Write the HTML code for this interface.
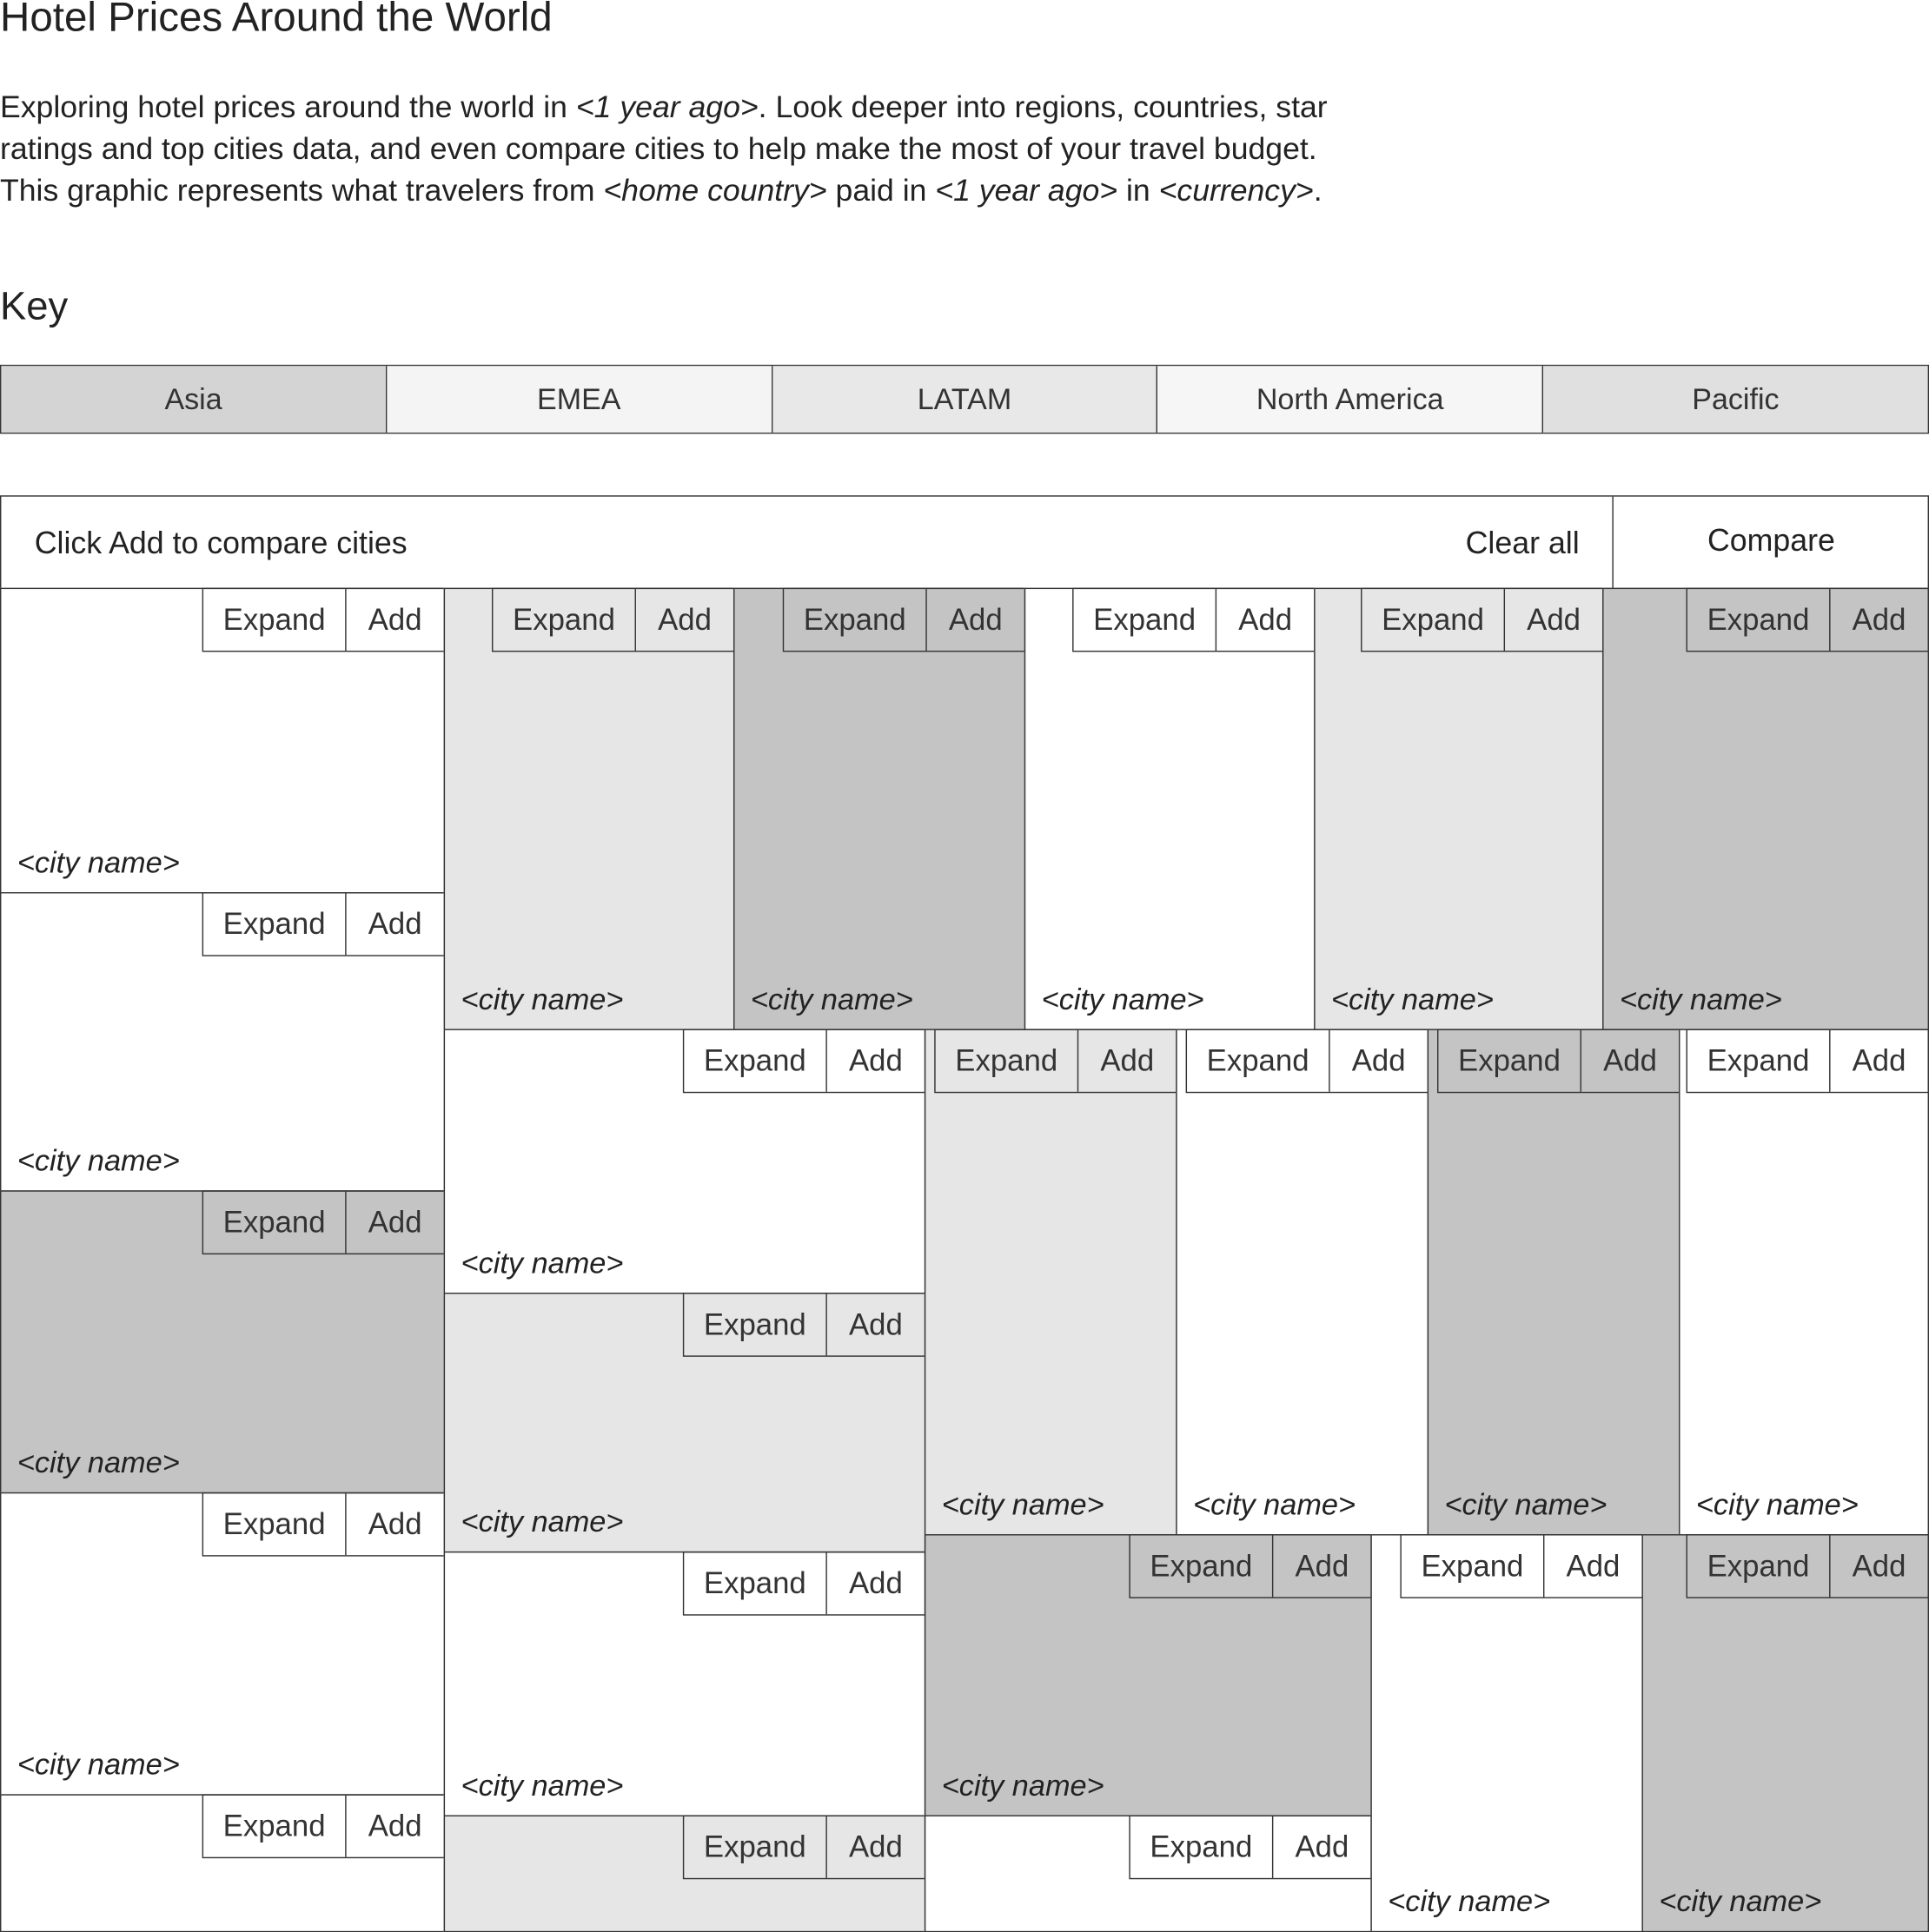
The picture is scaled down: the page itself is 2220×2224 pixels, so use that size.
<!DOCTYPE html>
<html><head><meta charset="utf-8">
<style>
html,body{margin:0;padding:0;background:#fff;overflow:hidden}
body{width:2220px;height:2224px;position:relative}
#w{position:absolute;left:0;top:0;width:1565px;height:1568px;transform:scale(1.41853);transform-origin:0 0;font-family:"Liberation Sans",sans-serif;color:#222}
.a{position:absolute;white-space:nowrap}
h1{position:absolute;left:0;top:-4px;margin:0;font-weight:normal;font-size:33.5px;color:#222;white-space:nowrap}
.p{position:absolute;left:0;top:70px;font-size:25.1px;line-height:34px;color:#222;white-space:nowrap}
.key{position:absolute;left:0;top:230px;font-size:32px}
.bar{position:absolute;left:0;top:296px;width:1565px;height:56px;border:1.3px solid #333;box-sizing:border-box;display:flex}
.bar div{flex:1;text-align:center;line-height:56px;font-size:24px;border-right:1.3px solid #333;color:#333}
.bar div:last-child{border-right:none}
.box{position:absolute;left:0;top:402px;width:1565px;height:1166px;border:1.3px solid #333;box-sizing:border-box}
.t{position:absolute;border:1.3px solid #333;box-sizing:border-box}
.b{position:absolute;right:-1px;top:-1px;height:52px;display:flex;border:1.3px solid #333;box-sizing:border-box;font-size:24.5px;color:#333}
.b span{display:block;text-align:center;line-height:52px}
.b span.e{width:115px;border-right:1.3px solid #333}
.b span.d{width:79px}
.c{position:absolute;left:13px;bottom:9px;font-style:italic;font-size:24.2px;color:#222;white-space:nowrap}
.w{background:#fff}.l{background:#e6e6e6}.k{background:#c4c4c4}
</style></head><body><div id="w">
<h1>Hotel Prices Around the World</h1>
<div class="p">Exploring hotel prices around the world in <i>&lt;1 year ago&gt;</i>. Look deeper into regions, countries, star<br>ratings and top cities data, and even compare cities to help make the most of your travel budget.<br>This graphic represents what travelers from <i>&lt;home country&gt;</i> paid in <i>&lt;1 year ago&gt;</i> in <i>&lt;currency&gt;</i>.</div>
<div class="key">Key</div>
<div class="bar"><div style="background:#d4d4d4">Asia</div><div style="background:#f4f4f4">EMEA</div><div style="background:#e8e8e8">LATAM</div><div style="background:#f6f6f6">North America</div><div style="background:#e0e0e0">Pacific</div></div>
<div class="box">
<div class="a" style="left:27px;top:24px;font-size:25.2px">Click Add to compare cities</div>
<div class="a" style="left:1188px;top:24px;font-size:25.2px">Clear all</div>
<div class="a" style="left:1307px;top:0;width:1.3px;height:75px;background:#333"></div>
<div class="a" style="left:1308px;top:22px;width:256px;text-align:center;font-size:25.2px">Compare</div>
</div>
<div class="t w" style="left:0;top:477px;width:361px;height:248px"><div class="b"><span class="e">Expand</span><span class="d">Add</span></div><div class="c">&lt;city name&gt;</div></div>
<div class="t w" style="left:0;top:724px;width:361px;height:243px"><div class="b"><span class="e">Expand</span><span class="d">Add</span></div><div class="c">&lt;city name&gt;</div></div>
<div class="t k" style="left:0;top:966px;width:361px;height:246px"><div class="b"><span class="e">Expand</span><span class="d">Add</span></div><div class="c">&lt;city name&gt;</div></div>
<div class="t w" style="left:0;top:1211px;width:361px;height:246px"><div class="b"><span class="e">Expand</span><span class="d">Add</span></div><div class="c">&lt;city name&gt;</div></div>
<div class="t w" style="left:0;top:1456px;width:361px;height:112px"><div class="b"><span class="e">Expand</span><span class="d">Add</span></div></div>
<div class="t l" style="left:360px;top:477px;width:236px;height:359px"><div class="b"><span class="e">Expand</span><span class="d">Add</span></div><div class="c">&lt;city name&gt;</div></div>
<div class="t k" style="left:595px;top:477px;width:237px;height:359px"><div class="b"><span class="e">Expand</span><span class="d">Add</span></div><div class="c">&lt;city name&gt;</div></div>
<div class="t w" style="left:831px;top:477px;width:236px;height:359px"><div class="b"><span class="e">Expand</span><span class="d">Add</span></div><div class="c">&lt;city name&gt;</div></div>
<div class="t l" style="left:1066px;top:477px;width:235px;height:359px"><div class="b"><span class="e">Expand</span><span class="d">Add</span></div><div class="c">&lt;city name&gt;</div></div>
<div class="t k" style="left:1300px;top:477px;width:265px;height:359px"><div class="b"><span class="e">Expand</span><span class="d">Add</span></div><div class="c">&lt;city name&gt;</div></div>
<div class="t w" style="left:360px;top:835px;width:391px;height:215px"><div class="b"><span class="e">Expand</span><span class="d">Add</span></div><div class="c">&lt;city name&gt;</div></div>
<div class="t l" style="left:360px;top:1049px;width:391px;height:211px"><div class="b"><span class="e">Expand</span><span class="d">Add</span></div><div class="c">&lt;city name&gt;</div></div>
<div class="t w" style="left:360px;top:1259px;width:391px;height:215px"><div class="b"><span class="e">Expand</span><span class="d">Add</span></div><div class="c">&lt;city name&gt;</div></div>
<div class="t l" style="left:360px;top:1473px;width:391px;height:95px"><div class="b"><span class="e">Expand</span><span class="d">Add</span></div></div>
<div class="t l" style="left:750px;top:835px;width:205px;height:411px"><div class="b"><span class="e">Expand</span><span class="d">Add</span></div><div class="c">&lt;city name&gt;</div></div>
<div class="t w" style="left:954px;top:835px;width:205px;height:411px"><div class="b"><span class="e">Expand</span><span class="d">Add</span></div><div class="c">&lt;city name&gt;</div></div>
<div class="t k" style="left:1158px;top:835px;width:205px;height:411px"><div class="b"><span class="e">Expand</span><span class="d">Add</span></div><div class="c">&lt;city name&gt;</div></div>
<div class="t w" style="left:1362px;top:835px;width:203px;height:411px"><div class="b"><span class="e">Expand</span><span class="d">Add</span></div><div class="c">&lt;city name&gt;</div></div>
<div class="t k" style="left:750px;top:1245px;width:363px;height:229px"><div class="b"><span class="e">Expand</span><span class="d">Add</span></div><div class="c">&lt;city name&gt;</div></div>
<div class="t w" style="left:750px;top:1473px;width:363px;height:95px"><div class="b"><span class="e">Expand</span><span class="d">Add</span></div></div>
<div class="t w" style="left:1112px;top:1245px;width:221px;height:323px"><div class="b"><span class="e">Expand</span><span class="d">Add</span></div><div class="c">&lt;city name&gt;</div></div>
<div class="t k" style="left:1332px;top:1245px;width:233px;height:323px"><div class="b"><span class="e">Expand</span><span class="d">Add</span></div><div class="c">&lt;city name&gt;</div></div>
</div></body></html>
